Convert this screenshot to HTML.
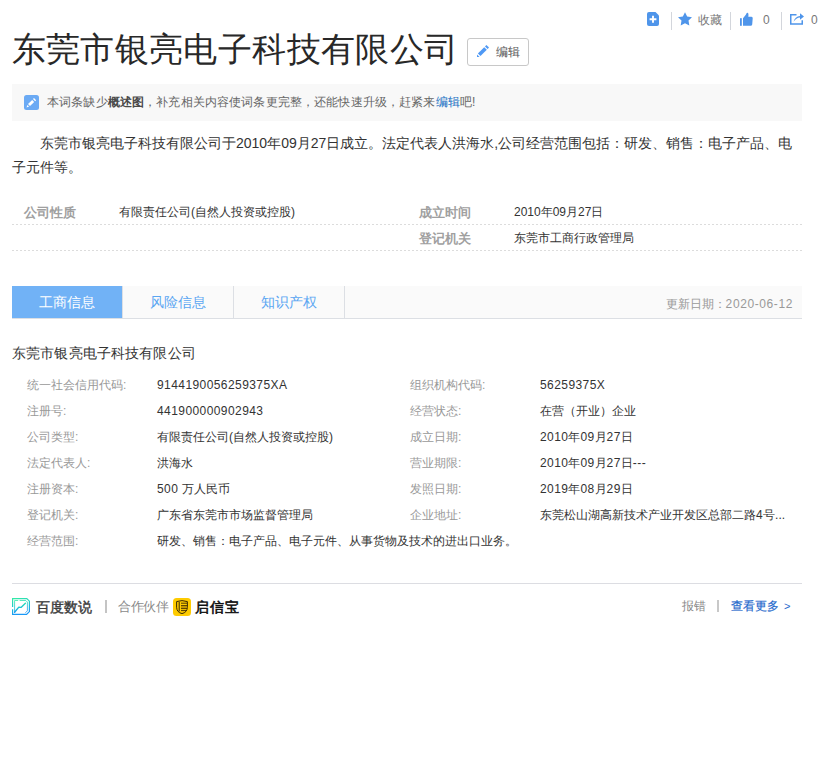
<!DOCTYPE html>
<html><head><meta charset="utf-8">
<style>
*{margin:0;padding:0;box-sizing:border-box}
svg{display:block}
html,body{width:818px;height:769px;background:#fff;overflow:hidden}
body{font-family:"Liberation Sans",sans-serif;color:#333;position:relative}
.a{position:absolute;white-space:nowrap}
.sep{position:absolute;width:1px;background:#d3d6dc}
.tb{font-size:12px;color:#777;line-height:14px}
.title{left:11.5px;top:27px;font-size:34px;line-height:44px;color:#282828;letter-spacing:0.4px}
.editbtn{left:467px;top:38px;width:62px;height:28px;border:1px solid #c8c8c8;border-radius:3px}
.editbtn span{position:absolute;left:28px;top:6px;font-size:12px;line-height:14px;color:#555}
.notice{left:12px;top:84px;width:790px;height:37px;background:#f8f8f8}
.notice .t{position:absolute;left:35px;top:11px;font-size:12px;line-height:14px;color:#666;letter-spacing:0.14px}
.notice b{color:#4a4a4a}
.notice a{color:#136ec2;text-decoration:none}
.para{left:12px;top:131px;width:790px;font-size:14px;line-height:24px;text-indent:28px;white-space:normal;color:#333}
.bi{left:12px;width:790px;height:26px;background-image:linear-gradient(to right,#dcdcdc 50%,transparent 50%);background-size:4px 1px;background-repeat:repeat-x;background-position:0 100%}
.bl{position:absolute;font-size:13px;line-height:14px;font-weight:bold;color:#a0a0a0}
.bv{position:absolute;font-size:12px;line-height:14px;color:#333}
.tabs{left:12px;top:286px;width:790px;height:33px;background:#fafafa;border-bottom:1px solid #dcdfe4}
.tab{position:absolute;top:0;width:110px;height:32px;text-align:center;font-size:14px;line-height:32px;color:#5aa6f2}
.tab.on{background:#71b2f6;color:#fff}
.tsep{position:absolute;top:0;width:1px;height:32px;background:#dcdfe4}
.upd{position:absolute;right:9px;top:11px;font-size:12px;line-height:14px;color:#999}
.cname{left:12px;top:346px;font-size:14px;line-height:14px;color:#333;letter-spacing:0.15px}
.row{position:absolute;white-space:nowrap;height:26px;font-size:12px;line-height:14px}
.row .l{position:absolute;left:0;color:#999}
.row .v{position:absolute;left:130px;color:#333}
i.n{font-style:normal;letter-spacing:0.42px}
.fline{left:12px;top:583px;width:790px;height:1px;background:#dcdde2}
</style></head><body>

<!-- toolbar -->
<div class="a" style="left:647px;top:12px;width:12px;height:14px">
<svg width="12" height="14" viewBox="0 0 12 14"><path d="M2 0H8.5L12 3.5V12a2 2 0 0 1-2 2H2a2 2 0 0 1-2-2V2a2 2 0 0 1 2-2z" fill="#4f95ea"/><path d="M6 3.7v7M2.6 7.2h6.8" stroke="#fff" stroke-width="1.9"/></svg>
</div>
<div class="sep" style="left:671px;top:12px;height:18px"></div>
<div class="a" style="left:678px;top:12px;width:14px;height:14px">
<svg width="14" height="14" viewBox="1 1 22 21.5"><path d="M12 1l3.4 7 7.6 1-5.5 5.3 1.3 7.7L12 18.3 5.2 22l1.3-7.7L1 9l7.6-1z" fill="#4f95ea"/></svg>
</div>
<div class="a tb" style="left:698px;top:13px">收藏</div>
<div class="sep" style="left:730px;top:12px;height:18px"></div>
<div class="a" style="left:739px;top:12px;width:14px;height:14px">
<svg width="14" height="14" viewBox="0 0 14 14"><rect x="1" y="6.2" width="1.8" height="7.6" fill="#4f95ea"/><path d="M4 6.2L7 2.6Q7.4 0.6 8.5 0.7Q9.9 1 9.3 4.8H12.5Q13.9 4.9 13.7 6.2L13.2 12.6Q13 13.8 11.7 13.8H4z" fill="#4f95ea"/></svg>
</div>
<div class="a tb" style="left:763px;top:13px">0</div>
<div class="sep" style="left:781px;top:12px;height:18px"></div>
<div class="a" style="left:790px;top:13px;width:14px;height:12px">
<svg width="14" height="12" viewBox="0 0 14 12"><path d="M6.5 1.75H0.75V11H12.25V7.3" fill="none" stroke="#4f95ea" stroke-width="1.5"/><path d="M3.6 8.8C4.3 5.2 6.8 3.2 10 2.9V0.2L14 3.4 10 6.7V4.6C7.4 4.6 5.4 6.2 3.6 8.8z" fill="#4f95ea"/></svg>
</div>
<div class="a tb" style="left:811px;top:13px">0</div>

<!-- title -->
<div class="a title">东莞市银亮电子科技有限公司</div>
<div class="a editbtn">
<svg style="position:absolute;left:9px;top:6px" width="12" height="12" viewBox="0 0 12 12"><path d="M0 12L0 9.4 2.6 12z" fill="#4f99f5"/><path d="M0.9 8.5L7.2 2.2 9.8 4.8 3.5 11.1z" fill="#4f99f5"/><path d="M8 1.4L9.4 0 12 2.6 10.6 4z" fill="#4f99f5"/></svg>
<span>编辑</span>
</div>

<!-- notice -->
<div class="a notice">
<svg style="position:absolute;left:12px;top:11px" width="15" height="15" viewBox="0 0 15 15"><rect width="15" height="15" rx="2.5" fill="#6baaf4"/><path d="M2.5 12.5L3.4 9.9 5.1 11.6z" fill="#fff"/><path d="M4 9.1L8.2 4.9 10.2 6.9 6 11.1z" fill="#fff"/><path d="M9 4.1L10 3.1 12.1 5.2 11.1 6.2z" fill="#fff"/></svg>
<div class="t">本词条缺少<b>概述图</b>，补充相关内容使词条更完整，还能快速升级，赶紧来<a>编辑</a>吧!</div>
</div>

<!-- paragraph -->
<div class="a para">东莞市银亮电子科技有限公司于2010年09月27日成立。法定代表人洪海水,公司经营范围包括：研发、销售：电子产品、电子元件等。</div>

<!-- basic info -->
<div class="a bi" style="top:199px">
<div class="bl" style="left:12px;top:7px">公司性质</div>
<div class="bv" style="left:107px;top:6px">有限责任公司(自然人投资或控股)</div>
<div class="bl" style="left:407px;top:7px">成立时间</div>
<div class="bv" style="left:502px;top:6px">2010年09月27日</div>
</div>
<div class="a bi" style="top:225px">
<div class="bl" style="left:407px;top:7px">登记机关</div>
<div class="bv" style="left:502px;top:6px">东莞市工商行政管理局</div>
</div>

<!-- tabs -->
<div class="a tabs">
<div class="tab on" style="left:0">工商信息</div>
<div class="tsep" style="left:110px"></div>
<div class="tab" style="left:111px">风险信息</div>
<div class="tsep" style="left:221px"></div>
<div class="tab" style="left:222px">知识产权</div>
<div class="tsep" style="left:332px"></div>
<div class="upd">更新日期：<i class="n" style="letter-spacing:0.6px">2020-06-12</i></div>
</div>

<div class="a cname">东莞市银亮电子科技有限公司</div>

<div class="row" style="left:27px;top:378px"><span class="l">统一社会信用代码:</span><span class="v"><i class="n">9144190056259375XA</i></span></div>
<div class="row" style="left:410px;top:378px"><span class="l">组织机构代码:</span><span class="v"><i class="n">56259375X</i></span></div>
<div class="row" style="left:27px;top:404px"><span class="l">注册号:</span><span class="v"><i class="n">441900000902943</i></span></div>
<div class="row" style="left:410px;top:404px"><span class="l">经营状态:</span><span class="v">在营（开业）企业</span></div>
<div class="row" style="left:27px;top:430px"><span class="l">公司类型:</span><span class="v">有限责任公司(自然人投资或控股)</span></div>
<div class="row" style="left:410px;top:430px"><span class="l">成立日期:</span><span class="v"><i class="n">2010</i>年<i class="n">09</i>月<i class="n">27</i>日</span></div>
<div class="row" style="left:27px;top:456px"><span class="l">法定代表人:</span><span class="v">洪海水</span></div>
<div class="row" style="left:410px;top:456px"><span class="l">营业期限:</span><span class="v"><i class="n">2010</i>年<i class="n">09</i>月<i class="n">27</i>日<i class="n">---</i></span></div>
<div class="row" style="left:27px;top:482px"><span class="l">注册资本:</span><span class="v"><i class="n">500</i> 万人民币</span></div>
<div class="row" style="left:410px;top:482px"><span class="l">发照日期:</span><span class="v"><i class="n">2019</i>年<i class="n">08</i>月<i class="n">29</i>日</span></div>
<div class="row" style="left:27px;top:508px"><span class="l">登记机关:</span><span class="v">广东省东莞市市场监督管理局</span></div>
<div class="row" style="left:410px;top:508px"><span class="l">企业地址:</span><span class="v">东莞松山湖高新技术产业开发区总部二路<i class="n">4</i>号...</span></div>
<div class="row" style="left:27px;top:534px"><span class="l">经营范围:</span><span class="v">研发、销售：电子产品、电子元件、从事货物及技术的进出口业务。</span></div>

<div class="a fline"></div>

<!-- footer -->
<div class="a" style="left:12px;top:598px;width:18px;height:17px">
<svg width="18" height="17" viewBox="0 0 18 17"><defs><linearGradient id="g1" x1="0" y1="0" x2="0.25" y2="1"><stop offset="0" stop-color="#34eaa6"/><stop offset="0.5" stop-color="#1fc9cc"/><stop offset="1" stop-color="#1a98f6"/></linearGradient></defs>
<path d="M0.6 8.9V0.6H14.8L17.4 3.2V13.6L14.6 16.4H0.6V11.2" fill="none" stroke="url(#g1)" stroke-width="1.2"/>
<path d="M2.6 14.6V2.5H6.2M7.6 2.5H13.8L15.4 4.1V12.8L13.4 14.8" fill="none" stroke="url(#g1)" stroke-width="1" opacity="0.8"/>
<path d="M2.6 14.2L6.8 9.1 9 9.4 13.4 5.3" fill="none" stroke="url(#g1)" stroke-width="1.4" stroke-linecap="round" stroke-linejoin="round"/></svg>
</div>
<div class="a" style="left:36px;top:599px;font-size:14px;line-height:16px;color:#3a3a3a;-webkit-text-stroke:0.4px #3a3a3a">百度数说</div>
<div class="a" style="left:105px;top:600px;width:2px;height:13px;background:#c4c4c4"></div>
<div class="a" style="left:118px;top:599px;font-size:13px;letter-spacing:-0.4px;line-height:16px;color:#8a8a8a">合作伙伴</div>
<div class="a" style="left:173px;top:598px;width:18px;height:18px;background:#fecb00;border-radius:3.5px">
<svg width="18" height="18" viewBox="0 0 18 18" style="position:absolute;left:0;top:0"><path d="M3.6 3.6Q9 1.6 14.4 3.6V9.2Q14.2 14.4 9 15.6Q3.8 14.4 3.6 9.2z" fill="none" stroke="#3b2a00" stroke-width="1"/><path d="M6.2 4V13.5" stroke="#3b2a00" stroke-width="1"/><path d="M8 5.2H14M8 7.6H14.3M8 10.6H14M8 12.6H13" stroke="#3b2a00" stroke-width="0.9"/><rect x="8" y="8.2" width="6.2" height="1.6" fill="#b48a00"/></svg>
</div>
<div class="a" style="left:195px;top:599px;font-size:14px;line-height:16px;color:#111;letter-spacing:0.8px;-webkit-text-stroke:0.6px #111">启信宝</div>

<div class="a" style="left:682px;top:599px;font-size:12px;line-height:14px;color:#888">报错</div>
<div class="a" style="left:717px;top:600px;width:2px;height:12px;background:#c8c8c8"></div>
<div class="a" style="left:731px;top:599px;font-size:12px;line-height:14px;color:#1f69cc;-webkit-text-stroke:0.2px #1f69cc">查看更多<span style="margin-left:5px;font-size:11px;-webkit-text-stroke:0">&gt;</span></div>

</body></html>
